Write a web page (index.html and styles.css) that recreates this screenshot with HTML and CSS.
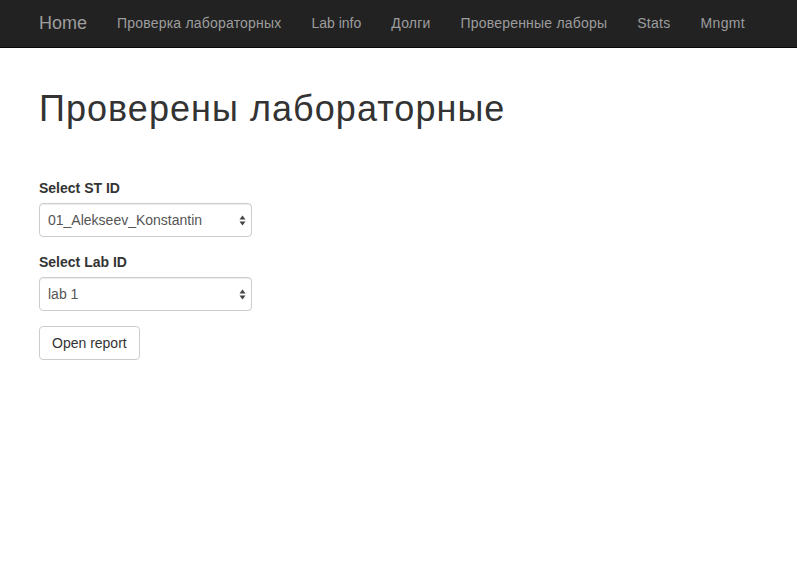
FILE: index.html
```html
<!DOCTYPE html>
<html lang="ru">
<head>
<meta charset="utf-8">
<title>Проверены лабораторные</title>
<link rel="stylesheet" href="styles.css">
</head>
<body>
<nav class="navbar">
  <div class="nav-inner">
    <a class="brand" href="#">Home</a>
    <ul class="nav-links">
      <li><a class="cyr" href="#">Проверка лабораторных</a></li>
      <li><a href="#">Lab info</a></li>
      <li><a class="cyr" href="#">Долги</a></li>
      <li><a class="cyr" href="#">Проверенные лаборы</a></li>
      <li><a class="wide" href="#">Stats</a></li>
      <li><a class="wide" href="#">Mngmt</a></li>
    </ul>
  </div>
</nav>
<main class="container">
  <h1 class="title">Проверены лабораторные</h1>
  <form class="form">
    <div class="form-group">
      <label class="label" for="st">Select ST ID</label>
      <div class="select-wrap">
        <select id="st" class="select">
          <option>01_Alekseev_Konstantin</option>
        </select>
        <svg class="select-arrow" width="7" height="11" viewBox="0 0 7 11"><path d="M3.5 0.5 L6.5 4.5 H0.5 Z M3.5 10.5 L6.5 6.5 H0.5 Z" fill="#444"/></svg>
      </div>
    </div>
    <div class="form-group">
      <label class="label" for="lab">Select Lab ID</label>
      <div class="select-wrap">
        <select id="lab" class="select">
          <option>lab 1</option>
        </select>
        <svg class="select-arrow" width="7" height="11" viewBox="0 0 7 11"><path d="M3.5 0.5 L6.5 4.5 H0.5 Z M3.5 10.5 L6.5 6.5 H0.5 Z" fill="#444"/></svg>
      </div>
    </div>
    <button type="button" class="btn">Open report</button>
  </form>
</main>
</body>
</html>
```
FILE: styles.css
```css
* { box-sizing: border-box; }
html, body { margin: 0; padding: 0; }
body {
  font-family: "Liberation Sans", Arial, sans-serif;
  font-size: 14px;
  line-height: 20px;
  color: #333;
  background: #fff;
}
.navbar {
  background: #222;
  border-bottom: 1px solid #080808;
  height: 48px;
}
.nav-inner {
  display: flex;
  align-items: flex-start;
  padding-left: 24px;
}
.brand {
  display: block;
  padding: 13px 15px 14px;
  font-size: 18px;
  line-height: 20px;
  color: #9d9d9d;
  text-decoration: none;
}
.nav-links {
  display: flex;
  flex-shrink: 0;
  list-style: none;
  margin: 0;
  padding: 0;
}
.nav-links li {
  flex-shrink: 0;
}
.nav-links a {
  display: block;
  padding: 13px 15px 14px;
  line-height: 20px;
  white-space: nowrap;
  color: #9d9d9d;
  text-decoration: none;
}
.nav-links a.cyr {
  letter-spacing: 0.2px;
}
.nav-links a.wide {
  letter-spacing: 0.3px;
}
.container {
  padding: 0 39px;
}
.title {
  margin: 41px 0 10px;
  font-size: 36px;
  font-weight: 500;
  line-height: 1.1;
  letter-spacing: 1.05px;
  color: #333;
}
.form {
  padding-top: 39px;
  width: 213px;
}
.form-group {
  margin-bottom: 15px;
}
.label {
  display: block;
  font-weight: bold;
  margin-bottom: 5px;
}
.select-wrap {
  position: relative;
}
.select {
  display: block;
  width: 213px;
  height: 34px;
  padding: 6px 20px 6px 8px;
  font-family: inherit;
  font-size: 14px;
  color: #555;
  background: #fff;
  border: 1px solid #ccc;
  border-radius: 4px;
  -webkit-appearance: none;
  appearance: none;
  box-shadow: inset 0 1px 1px rgba(0,0,0,0.075);
}
.select-arrow {
  position: absolute;
  right: 6px;
  top: 12px;
}
.btn {
  display: inline-block;
  height: 34px;
  padding: 6px 12px;
  font-family: inherit;
  font-size: 14px;
  line-height: 20px;
  color: #333;
  background: #fff;
  border: 1px solid #ccc;
  border-radius: 4px;
}
```
